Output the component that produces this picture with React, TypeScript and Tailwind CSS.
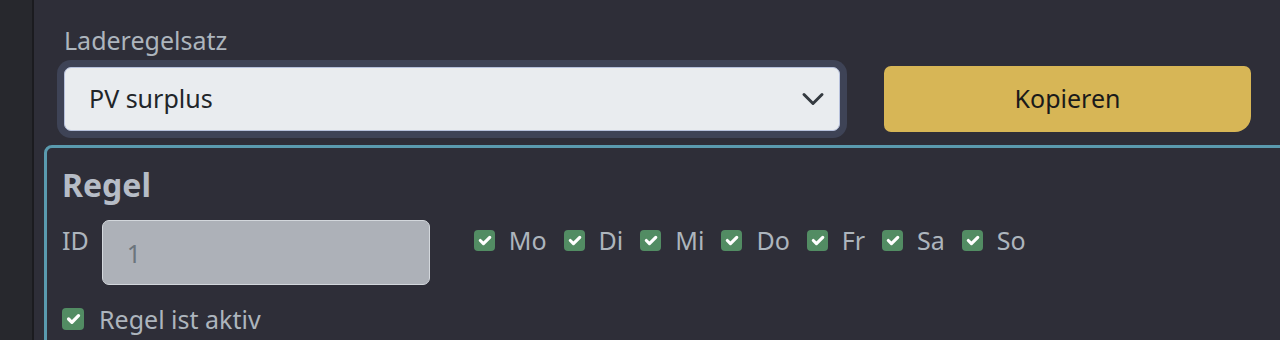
const days = ["Mo", "Di", "Mi", "Do", "Fr", "Sa", "So"];

const Check = ({ size = 21 }: { size?: number }) => (
  <span
    className="flex shrink-0 items-center justify-center rounded-[4px] bg-[#528c63]"
    style={{ width: size, height: size }}
  >
    <svg width={size} height={size} viewBox="0 0 20 20" fill="none">
      <path
        d="m6 10 3 3 6-6"
        stroke="#fff"
        strokeWidth="3"
        strokeLinecap="round"
        strokeLinejoin="round"
      />
    </svg>
  </span>
);

export default function App() {
  return (
    <div
      className="flex h-[340px] w-full overflow-hidden bg-[#2e2e38] text-[25px] text-[#adb5bd]"
      style={{ fontFamily: '"Noto Sans", "Open Sans", sans-serif' }}
    >
      <div className="w-[34px] shrink-0 border-r-2 border-[#1b1b1f] bg-[#27282d]" />

      <div className="min-w-0 flex-1 pl-[10px] pt-[25px]">
        <div className="pl-5">
          <label className="mb-[11px] block leading-[30px]">Laderegelsatz</label>
          <div className="flex items-center">
            <div className="flex h-16 w-[776px] items-center justify-between rounded-[7px] border border-[#b7c1dc] bg-[#e9ecef] pl-6 pr-[14px] text-[#212529] shadow-[0_0_0_7px_#3e4356]">
              <span>PV surplus</span>
              <svg width="24" height="24" viewBox="0 0 16 16" fill="none">
                <path
                  d="m2 5 6 6 6-6"
                  stroke="#343a40"
                  strokeWidth="2"
                  strokeLinecap="round"
                  strokeLinejoin="round"
                />
              </svg>
            </div>
            <button className="ml-11 h-[66px] w-[367px] rounded-[7px] rounded-br-[16px] bg-[#d7b656] text-[#1a1a1a]">
              Kopieren
            </button>
          </div>
        </div>

        <div className="-mr-4 mt-[13px] rounded-tl-[8px] border-[3px] border-[#5a9aae] pb-10 pl-[15px] pt-[18px]">
          <h2 className="text-[32px] font-bold leading-[38px] text-[#b6bcc6]">Regel</h2>
          <div className="mt-4 flex items-start">
            <span className="mt-[5px] leading-[30px]">ID</span>
            <input
              disabled
              value="1"
              className="ml-[13px] h-[65px] w-[328px] rounded-[7px] border border-[#d3d7dc] bg-[#adb1b8] px-6 text-[#6c757d]"
            />
            <div className="ml-[44px] mt-[5px] flex items-center">
              {days.map((d) => (
                <div key={d} className="mr-[17px] flex items-center">
                  <Check />
                  <span className="ml-[14px] leading-[30px]">{d}</span>
                </div>
              ))}
            </div>
          </div>
          <div className="mt-[19px] flex items-center">
            <Check size={22} />
            <span className="ml-[15px] leading-[30px]">Regel ist aktiv</span>
          </div>
        </div>
      </div>
    </div>
  );
}
